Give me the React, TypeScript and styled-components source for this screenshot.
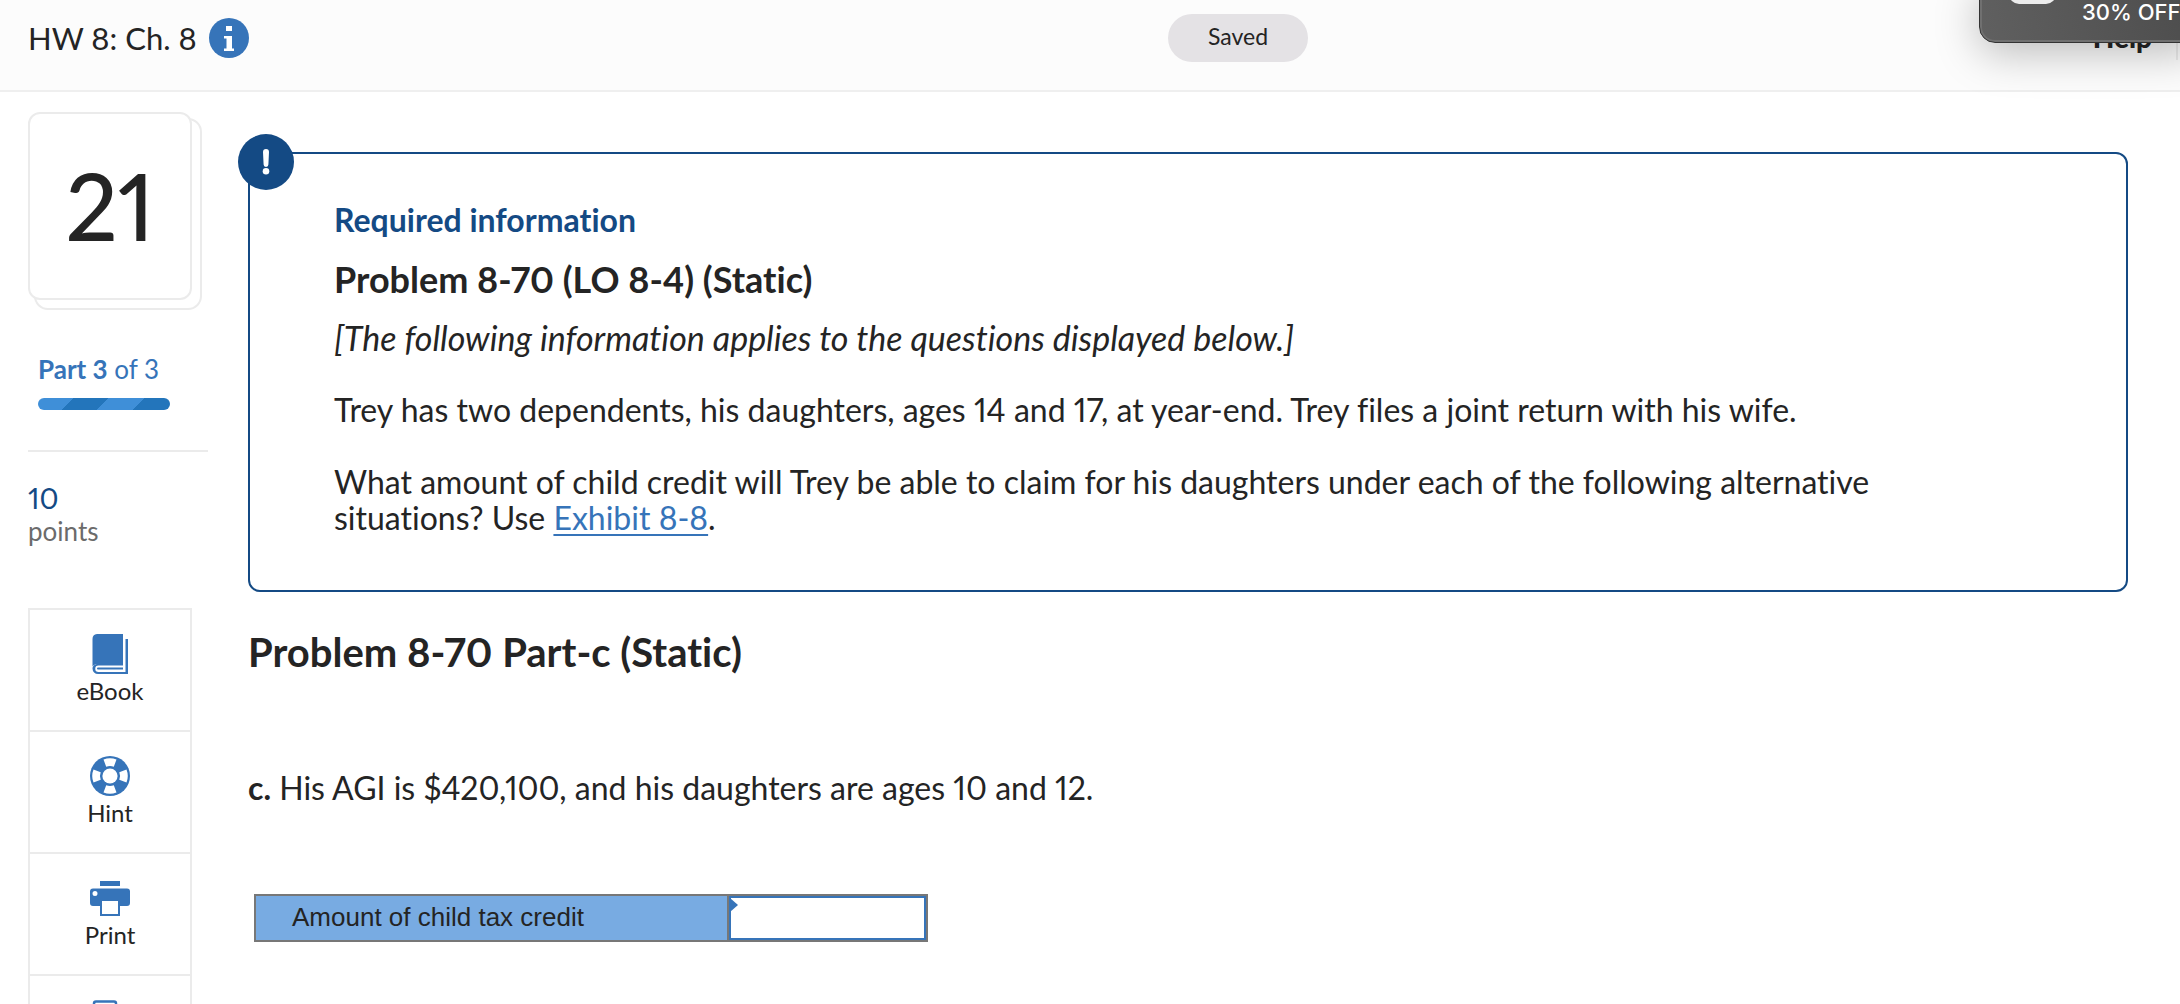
import React from 'react';
import styled, { createGlobalStyle } from 'styled-components';

const color = {
  ink: '#242424',
  navy: '#144a84',
  blue: '#3674b9',
  line: '#ebebeb',
};

const GlobalStyle = createGlobalStyle`
  *, *::before, *::after { box-sizing: border-box; }
  body {
    margin: 0;
    background: #fff;
    color: ${color.ink};
    font-family: Lato, "Liberation Sans", sans-serif;
    font-size: 32px;
    line-height: 36px;
    font-variant-ligatures: none;
    font-variant-numeric: proportional-nums;
  }
  h1, h2, h3, p { margin: 0; }
  button { font: inherit; color: inherit; border: 0; background: none; padding: 0; cursor: pointer; }
`;

const Page = styled.div`
  position: relative;
  height: 100vh;
  overflow: hidden;
`;

const Header = styled.header`
  display: grid;
  grid-template-columns: 296px 1fr auto 1fr;
  align-items: start;
  height: 92px;
  padding-top: 14px;
  background: #fcfcfc;
  border-bottom: 2px solid #efefef;
`;

const TitleGroup = styled.div`
  display: flex;
  align-items: center;
  gap: 12px;
  height: 48px;
  padding-left: 28px;
  white-space: nowrap;
`;

const Title = styled.h1`
  font-size: 31px;
  font-weight: 400;
`;

const InfoButton = styled.button`
  display: flex;
  svg { display: block; }
`;

const Saved = styled.div`
  grid-column: 3;
  display: flex;
  align-items: center;
  justify-content: center;
  width: 140px;
  height: 48px;
  padding-bottom: 4px;
  border-radius: 24px;
  background: #e4e2e5;
  font-size: 23px;
`;

const HelpArea = styled.div`
  display: flex;
  justify-content: flex-end;
  height: 46px;
  margin-right: 2px;
  padding-right: 24px;
  border-right: 2px solid ${color.line};
`;

const HelpButton = styled.button`
  font-size: 28px;
  font-weight: 900;
  line-height: 46px;
`;

const Toast = styled.aside`
  position: absolute;
  top: -20px;
  right: -20px;
  display: flex;
  gap: 26px;
  width: 221px;
  height: 63px;
  padding-left: 29px;
  border: 1px solid #333;
  border-radius: 16px;
  background: linear-gradient(75deg, #606060, #565656 50%, #4c4c4c);
  box-shadow: inset 0 0 0 2px #707070, 0 10px 44px rgba(0, 0, 0, 0.26);
  color: #fff;
  font: 500 22px/26px Inter, sans-serif;
`;

const ToastIcon = styled.span`
  width: 47px;
  height: 23px;
  border-radius: 10px;
  background: #ececec;
`;

const ToastText = styled.span`
  padding-top: 18px;
  white-space: nowrap;
`;

const Body = styled.div`
  display: flex;
  align-items: flex-start;
`;

const Sidebar = styled.aside`
  flex: 0 0 248px;
  padding: 20px 40px 0 28px;
`;

const CardStack = styled.div`
  position: relative;
  z-index: 0;
  &::before {
    content: '';
    position: absolute;
    z-index: -1;
    top: 6px;
    left: 6px;
    width: 168px;
    height: 192px;
    border: 2px solid ${color.line};
    border-radius: 14px;
  }
`;

const NumberCard = styled.div`
  display: flex;
  align-items: center;
  justify-content: center;
  width: 164px;
  height: 188px;
  border: 2px solid ${color.line};
  border-radius: 12px;
  background: #fff;
  font-size: 92px;
  font-weight: 500;
`;

const PartGroup = styled.div`
  display: flex;
  flex-direction: column;
  gap: 14px;
  margin-top: 54px;
  padding: 0 10px 40px;
  color: ${color.blue};
  font-size: 26px;
  line-height: 30px;
`;

const Progress = styled.div`
  width: 132px;
  height: 12px;
  border-radius: 6px;
  background: repeating-linear-gradient(135deg, #3f8fd8 0 25px, #2375bb 25px 50px);
`;

const Points = styled.div`
  display: flex;
  flex-direction: column;
  width: 180px;
  padding: 28px 0 0;
  border-top: 2px solid ${color.line};
  color: #6b6b6b;
  font-size: 26px;
  line-height: 30px;
`;

const PointsValue = styled.span`
  color: ${color.navy};
  font-size: 29px;
  line-height: 36px;
`;

const Tools = styled.nav`
  display: flex;
  flex-direction: column;
  width: 164px;
  margin-top: 62px;
  border: 2px solid ${color.line};
`;

const Tool = styled.button`
  display: flex;
  flex-direction: column;
  align-items: center;
  gap: 2px;
  height: 122px;
  padding-top: 24px;
  border-bottom: 2px solid ${color.line};
  font-size: 24px;
  line-height: 30px;
  svg { display: block; flex: none; }
`;

const Main = styled.main`
  flex: 1;
  min-width: 0;
  padding: 60px 52px 0 0;
`;

const InfoBox = styled.section`
  position: relative;
  padding: 48px 172px 54px 84px;
  border: 2px solid ${color.navy};
  border-radius: 12px;
`;

const AlertBadge = styled.span`
  position: absolute;
  top: -20px;
  left: -12px;
  svg { display: block; }
`;

const Required = styled.h2`
  color: ${color.navy};
  font-size: 32px;
  font-weight: 700;
  line-height: 36px;
`;

const ProblemTitle = styled.h3`
  margin-top: 20px;
  font-size: 36px;
  font-weight: 700;
  line-height: 42px;
`;

const Intro = styled.p`
  margin-top: 20px;
  font-size: 34px;
  font-style: italic;
  line-height: 36px;
`;

const Paragraph = styled.p`
  margin-top: 36px;
`;

const Question = styled.p`
  margin-top: 96px;
`;

const Link = styled.a`
  color: ${color.blue};
  text-decoration: underline;
  text-decoration-thickness: 2px;
  text-underline-offset: 4px;
`;

const PartTitle = styled.h2`
  margin-top: 38px;
  font-size: 40px;
  font-weight: 700;
  line-height: 44px;
`;

const AnswerTable = styled.table`
  margin: 88px 0 0 6px;
  border-collapse: collapse;
  font: 26px/30px "Liberation Sans", Arial, sans-serif;
`;

const LabelCell = styled.th`
  width: 473px;
  padding: 0 0 2px 36px;
  border: 2px solid #777;
  background: #78abe2;
  font-weight: 400;
  text-align: left;
`;

const InputCell = styled.td`
  position: relative;
  width: 199px;
  padding: 0;
  border: 2px solid #777;
  &::before {
    content: '';
    position: absolute;
    top: 2px;
    left: 1px;
    border: solid transparent;
    border-width: 7px 0 7px 8px;
    border-left-color: ${color.blue};
  }
`;

const AnswerInput = styled.input`
  display: block;
  width: 100%;
  height: 44px;
  padding: 0 12px;
  border: 2px solid ${color.blue};
  border-radius: 0;
  background: #fff;
  font: inherit;
  outline: 0;
`;

const InfoIcon = () => (
  <svg width="40" height="40" viewBox="0 0 40 40" aria-hidden="true">
    <circle cx="20" cy="20" r="20" fill={color.blue} />
    <path fill="#fff" d="M17 8h6v5h-6zM15 18h8v12.500h2V33H15v-2.500h2.500v-10H15z" />
  </svg>
);

const AlertIcon = () => (
  <svg width="56" height="56" viewBox="0 0 56 56" aria-hidden="true">
    <circle cx="28" cy="28" r="28" fill={color.navy} />
    <path fill="#fff" d="M25 18a3 3 0 0 1 6 0l-.6 12.500a2.400 2.400 0 0 1-4.800 0z" />
    <circle cx="28" cy="37.300" r="3.300" fill="#fff" />
  </svg>
);

const BookIcon = () => (
  <svg width="40" height="40" viewBox="0 0 40 40" fill={color.blue} aria-hidden="true">
    <path d="M7 0H33v30H8c-2 0-4 .5-5.500 2.500V5A5 5 0 0 1 7 0z" />
    <path d="M35.500 5H38v35H8a5.500 5.500 0 0 1-5.500-5.500C2.500 32 5 30 8 30h25v1.500H8.500a3.200 3.200 0 0 0 0 6.500h27z" />
    <path d="M8 33.500h25v2H8a1 1 0 0 1 0-2z" />
  </svg>
);

const HINT_WEDGES = [0, 90, 180, 270];

const HintIcon = () => (
  <svg width="40" height="40" viewBox="0 0 40 40" aria-hidden="true">
    <circle cx="20" cy="20" r="20" fill={color.blue} />
    {HINT_WEDGES.map((angle) => (
      <path
        key={angle}
        fill="#fff"
        transform={`rotate(${angle} 20 20)`}
        d="M13.500 3.500a17.600 17.600 0 0 1 13 0l-2.700 7.200a10 10 0 0 0-7.600 0z"
      />
    ))}
    <circle cx="20" cy="20" r="7.600" fill="#fff" />
  </svg>
);

const PrintIcon = () => (
  <svg width="40" height="40" viewBox="0 0 40 40" fill={color.blue} aria-hidden="true">
    <path d="M10 3h20v5H10z" />
    <path
      fillRule="evenodd"
      d="M3 10.500h34a3 3 0 0 1 3 3V25a3 3 0 0 1-3 3h-7v10H10V28H3a3 3 0 0 1-3-3V13.500a3 3 0 0 1 3-3zM12 23v13h16V23zM5 13a2.500 2.500 0 1 0 0 5 2.500 2.500 0 0 0 0-5z"
    />
  </svg>
);

const ReferencesIcon = () => (
  <svg width="40" height="40" viewBox="0 0 40 40" fill="none" stroke={color.blue} strokeWidth="2.500" aria-hidden="true">
    <rect x="4" y="1.500" width="22" height="30" rx="2" />
    <path d="M26 9h8v29H12v-6" />
  </svg>
);

const TOOLS = [
  { label: 'eBook', Icon: BookIcon },
  { label: 'Hint', Icon: HintIcon },
  { label: 'Print', Icon: PrintIcon },
];

export default function App() {
  return (
    <Page>
      <GlobalStyle />
      <Header>
        <TitleGroup>
          <Title>HW 8: Ch. 8</Title>
          <InfoButton type="button" aria-label="Assignment information">
            <InfoIcon />
          </InfoButton>
        </TitleGroup>
        <Saved>Saved</Saved>
        <HelpArea>
          <HelpButton type="button">Help</HelpButton>
        </HelpArea>
      </Header>
      <Body>
        <Sidebar>
          <CardStack>
            <NumberCard>21</NumberCard>
          </CardStack>
          <PartGroup>
            <span>
              <b>Part 3</b> of 3
            </span>
            <Progress />
          </PartGroup>
          <Points>
            <PointsValue>10</PointsValue>
            points
          </Points>
          <Tools>
            {TOOLS.map(({ label, Icon }) => (
              <Tool key={label} type="button">
                <Icon />
                {label}
              </Tool>
            ))}
            <Tool type="button" aria-label="References">
              <ReferencesIcon />
            </Tool>
          </Tools>
        </Sidebar>
        <Main>
          <InfoBox>
            <AlertBadge>
              <AlertIcon />
            </AlertBadge>
            <Required>Required information</Required>
            <ProblemTitle>Problem 8-70 (LO 8-4) (Static)</ProblemTitle>
            <Intro>[The following information applies to the questions displayed below.]</Intro>
            <Paragraph>
              Trey has two dependents, his daughters, ages 14 and 17, at year-end. Trey files a joint return with his
              wife.
            </Paragraph>
            <Paragraph>
              What amount of child credit will Trey be able to claim for his daughters under each of the following
              alternative situations? Use <Link href="#exhibit-8-8">Exhibit 8-8</Link>.
            </Paragraph>
          </InfoBox>
          <PartTitle>Problem 8-70 Part-c (Static)</PartTitle>
          <Question>
            <b>c.</b> His AGI is $420,100, and his daughters are ages 10 and 12.
          </Question>
          <AnswerTable>
            <tbody>
              <tr>
                <LabelCell scope="row">
                  <label htmlFor="credit">Amount of child tax credit</label>
                </LabelCell>
                <InputCell>
                  <AnswerInput id="credit" type="text" />
                </InputCell>
              </tr>
            </tbody>
          </AnswerTable>
        </Main>
      </Body>
      <Toast>
        <ToastIcon />
        <ToastText>30% OFF</ToastText>
      </Toast>
    </Page>
  );
}
